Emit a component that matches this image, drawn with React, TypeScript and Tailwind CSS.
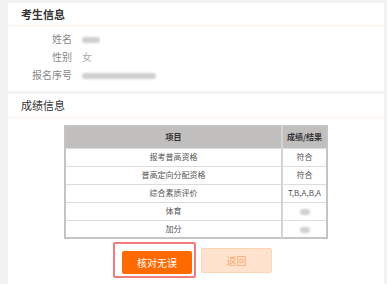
import React from 'react';

const rows = [
  { item: '报考普高资格', result: '符合' },
  { item: '普高定向分配资格', result: '符合' },
  { item: '综合素质评价', result: 'T,B,A,B,A' },
  { item: '体育', result: '' },
  { item: '加分', result: '' },
];

const Blur: React.FC<{ w: string }> = ({ w }) => (
  <span className={`inline-block h-[6px] ${w} rounded-sm bg-[#cfcfcf] blur-[1px] align-middle`} />
);

export default function App() {
  return (
    <div
      className="w-[387px] h-[284px] overflow-hidden bg-[#f2f2f2] pt-[3px] pl-[8px] pr-[3px]"
      style={{ fontFamily: '"Noto Sans CJK SC", "Noto Sans", sans-serif' }}
    >
      <div className="bg-white">
        <div className="h-[23px] pl-[13px] flex items-center text-[11px] font-bold text-[#333] border-b border-[#fdf1ea]">
          考生信息
        </div>
        <div className="pt-[3px] pb-[8px] text-[10px] text-[#888]">
          <div className="flex items-center h-[18px]">
            <span className="w-[64px] text-right">姓名</span>
            <span className="ml-[10px]"><Blur w="w-[18px]" /></span>
          </div>
          <div className="flex items-center h-[18px]">
            <span className="w-[64px] text-right">性别</span>
            <span className="ml-[10px] text-[#aaa]">女</span>
          </div>
          <div className="flex items-center h-[18px]">
            <span className="w-[64px] text-right">报名序号</span>
            <span className="ml-[10px]"><Blur w="w-[74px]" /></span>
          </div>
        </div>
      </div>

      <div className="bg-white mt-[3px] h-[200px]">
        <div className="h-[24px] pl-[13px] flex items-center text-[11px] text-[#333] border-b border-[#fdf1ea]">
          成绩信息
        </div>
        <div className="pl-[56px] pt-[7px]">
          <table className="w-[264px] border-collapse text-[8px] text-[#555] border-2 border-[#c4c4c4]">
            <thead>
              <tr className="bg-[#c0bfbe] h-[22px]">
                <th className="font-bold text-[#333] border-r-2 border-[#d4d4d4]">项目</th>
                <th className="w-[45px] font-bold text-[#333]">成绩/结果</th>
              </tr>
            </thead>
            <tbody>
              {rows.map((r) => (
                <tr key={r.item} className="h-[18px] border-t border-[#dcdcdc]">
                  <td className="text-center border-r-2 border-[#d4d4d4]">{r.item}</td>
                  <td className="text-center">
                    {r.result ? r.result : <Blur w="w-[10px]" />}
                  </td>
                </tr>
              ))}
            </tbody>
          </table>
          <div className="flex items-center mt-[3px] ml-[49px] gap-[5px]">
            <div className="border-2 border-[#f47b7b] rounded-[2px] pl-[7px] pr-[2px] pt-[4px] pb-[2px]">
              <button className="w-[70px] h-[23px] bg-[#ff6a00] text-white text-[10px] rounded-[2px]">
                核对无误
              </button>
            </div>
            <button className="w-[71px] h-[25px] bg-[#ffe3cf] border border-[#ffd3b5] text-[#ffa36b] text-[10px] rounded-[2px]">
              返回
            </button>
          </div>
        </div>
      </div>
    </div>
  );
}
